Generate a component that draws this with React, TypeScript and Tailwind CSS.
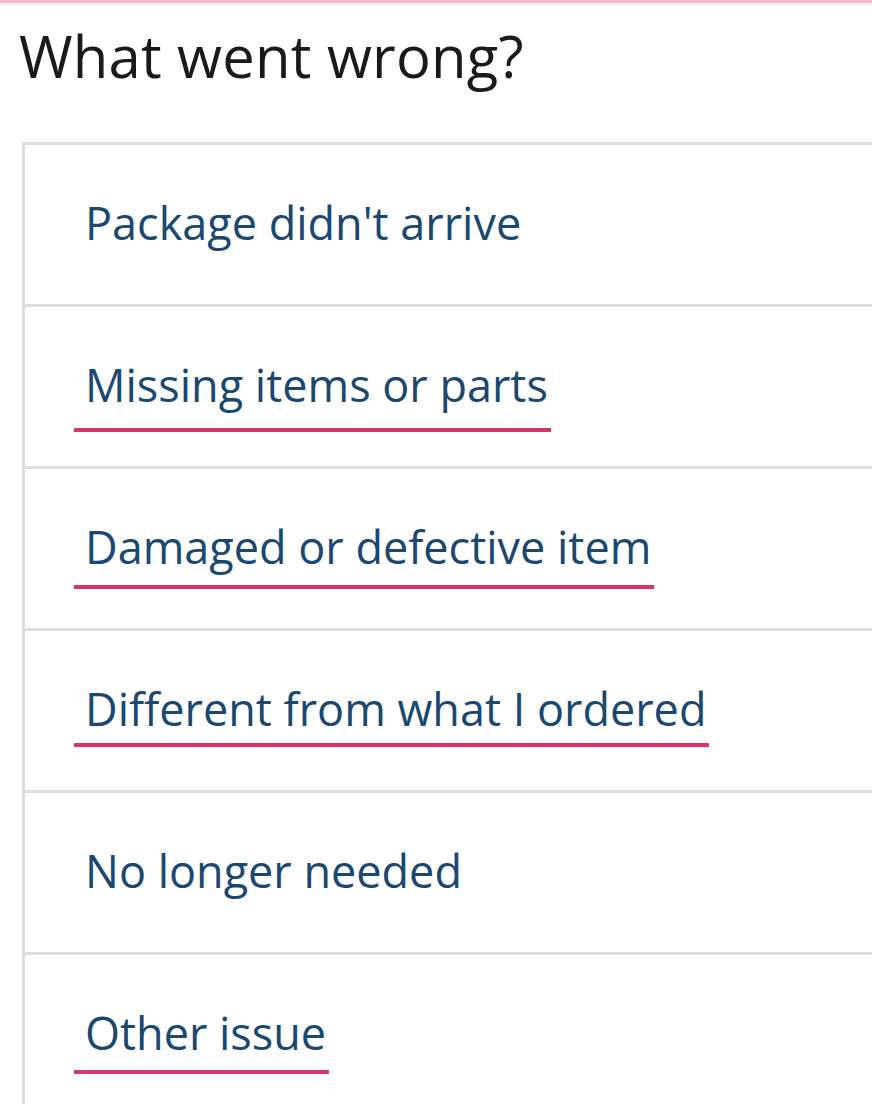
import React from 'react';

interface Reason {
  label: string
  // gap between baseline and the pink mark, when the row is marked
  mark?: number
}

const reasons: Reason[] = [
  { label: "Package didn't arrive" },
  { label: 'Missing items or parts', mark: 26 },
  { label: 'Damaged or defective item', mark: 21 },
  { label: 'Different from what I ordered', mark: 17 },
  { label: 'No longer needed' },
  { label: 'Other issue', mark: 20 },
];

function ReasonRow({ label, mark, first }: Reason & { first: boolean }) {
  return (
    <button
      className={`flex w-full items-start pl-[60px] pt-[55px] pb-[59px] text-left ${
        first ? '' : 'border-t-[3px] border-[#dcdfdf]'
      }`}
    >
      <span className="relative text-[45px] leading-[45px] text-[#1a4870]">
        {label}
        {mark !== undefined && (
          <span
            className="absolute left-[-11px] right-[-3px] h-[4px] bg-[#d7346b]"
            style={{ top: 40 + mark }}
          />
        )}
      </span>
    </button>
  );
}

export default function App() {
  return (
    <div
      className="min-h-[1104px] overflow-hidden bg-white"
      style={{ fontFamily: '"Open Sans", "Noto Sans", sans-serif' }}
    >
      <div className="h-[3px] bg-[#f6bcd2]" />
      <div className="h-[2px] bg-[#fde9f1]" />
      <h1 className="mt-[22px] pl-[19px] text-[58px] leading-[57px] tracking-[0.2px] text-[#1a1a1a]">
        What went wrong?
      </h1>
      <div className="ml-[22px] mt-[58px] w-[900px] border-l-[3px] border-t-[3px] border-[#dcdfdf]">
        {reasons.map((r, i) => (
          <ReasonRow key={r.label} {...r} first={i === 0} />
        ))}
      </div>
    </div>
  );
}
